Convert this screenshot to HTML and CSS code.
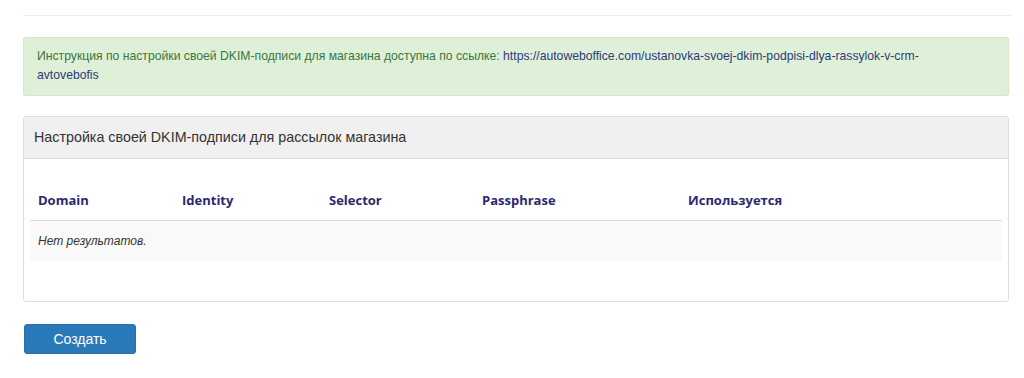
FILE: index.html
```html
<!DOCTYPE html>
<html lang="ru">
<head>
  <meta charset="UTF-8" />
  <meta name="viewport" content="width=device-width, initial-scale=1.0"/>
  <title>DKIM</title>
  <link rel="stylesheet" href="styles.css">
</head>
<body>
  <div class="container">
    <hr class="divider" />

    <div class="alert">
      Инструкция по настройки своей DKIM-подписи для магазина доступна по ссылке:
      <a href="#">https://autoweboffice.com/ustanovka-svoej-dkim-podpisi-dlya-rassylok-v-crm-avtovebofis</a>
    </div>

    <div class="panel">
      <div class="panel-heading">Настройка своей DKIM-подписи для рассылок магазина</div>
      <div class="panel-body">
        <table class="grid">
          <thead>
            <tr>
              <th class="col-domain">Domain</th>
              <th class="col-identity">Identity</th>
              <th class="col-selector">Selector</th>
              <th class="col-pass">Passphrase</th>
              <th>Используется</th>
            </tr>
          </thead>
          <tbody>
            <tr>
              <td colspan="5" class="empty">Нет результатов.</td>
            </tr>
          </tbody>
        </table>
      </div>
    </div>

    <button class="btn">Создать</button>
  </div>
</body>
</html>
```

FILE: styles.css
```css
body {
  font-family: "Liberation Sans", Arial, sans-serif;
  color: #333;
  background: #fff;
  margin: 0;
}

.container {
  padding: 0 15px 0 23px;
}

.divider {
  border: 0;
  border-top: 1px solid #eee;
  height: 0;
  margin: 15px -3px 21px 0;
}

.alert {
  background: #dff0d8;
  border: 1px solid #d6e9c6;
  border-radius: 2px;
  color: #3c763d;
  font-size: 12.2px;
  line-height: 19px;
  padding: 9px 60px 10px 13px;
}

.alert a {
  color: #2b3a7a;
  text-decoration: none;
}

.panel {
  margin-top: 20px;
  border: 1px solid #ddd;
  border-radius: 3px;
}

.panel-heading {
  background: #f0f0f0;
  border-bottom: 1px solid #ddd;
  font-size: 14.3px;
  line-height: 20px;
  padding: 10px 10px 11px;
  color: #333;
}

.panel-body {
  padding: 26px 6px 40px;
}

.grid {
  width: 100%;
  border-collapse: collapse;
}

.grid th {
  text-align: left;
  font-family: "Open Sans", "Liberation Sans", sans-serif;
  font-size: 13px;
  font-weight: bold;
  color: #2a2a6e;
  padding: 7px 8px 11px;
  line-height: 17px;
  border-bottom: 1px solid #ddd;
}

.col-domain { width: 128px; }
.col-identity { width: 131px; }
.col-selector { width: 137px; }
.col-pass { width: 190px; }

.grid td {
  background: #f9f9f9;
  padding: 12px 8px;
  line-height: 16px;
}

.empty {
  font-style: italic;
  font-size: 12px;
  color: #333;
}

.btn {
  margin-top: 22px;
  margin-left: 1px;
  width: 112px;
  height: 30px;
  background: #2a7ab9;
  border: 1px solid #2870ab;
  border-radius: 3px;
  color: #fff;
  font-family: "Liberation Sans", Arial, sans-serif;
  font-size: 14px;
  cursor: pointer;
}
```
